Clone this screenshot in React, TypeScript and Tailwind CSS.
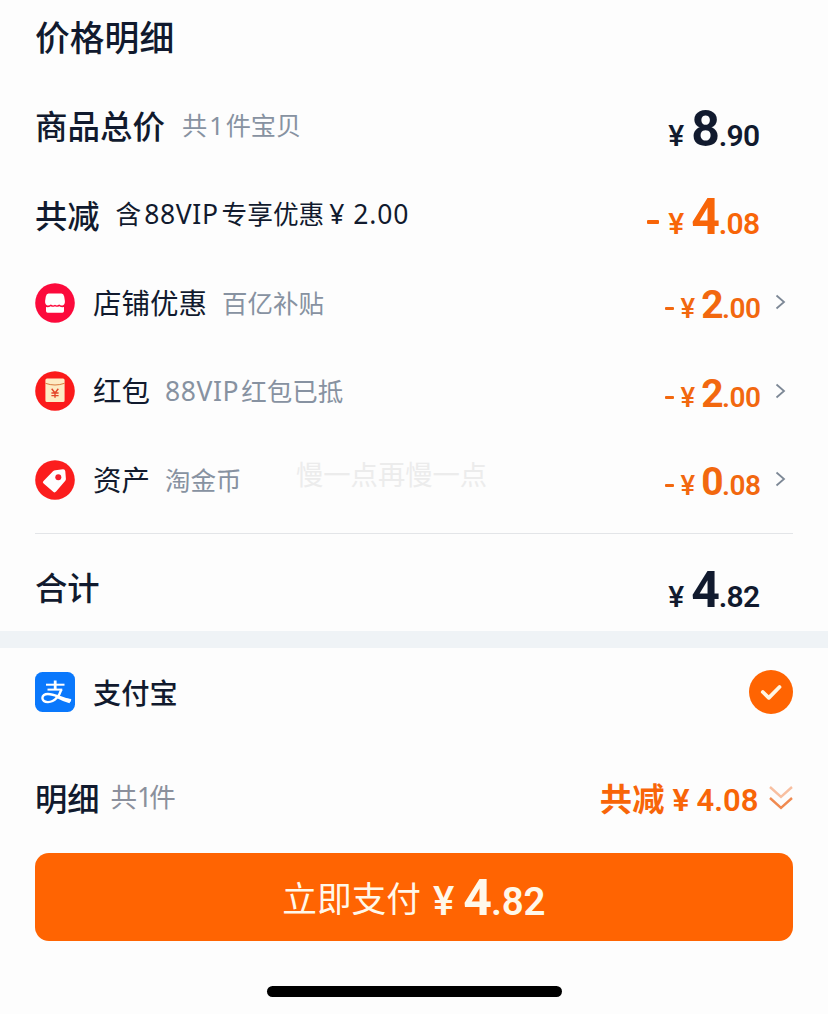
/**
 * PriceDetail - Checkout sheet with price breakdown, payment method and pay button.
 */
import { ReactNode } from "react";

interface PriceProps {
  whole: string;
  cents: string;
  minus?: boolean;
  small?: boolean;
}

// Amount with a large integer part and smaller cents
function Price({ whole, cents, minus, small }: PriceProps) {
  if (small) {
    return (
      <div className="flex items-baseline font-['Roboto'] font-bold leading-none text-[#f2680f]">
        <span className="relative top-[3px] mr-[7px] h-[3px] w-[9px] self-center rounded-[1px] bg-[#f2680f]" />
        <span className="mr-[6px] text-[27.5px] font-medium">¥</span>
        <span className="text-[39px] font-bold tracking-[-1.5px]">{whole}</span>
        <span className="text-[28px] font-semibold tracking-[-0.5px]">.{cents}</span>
      </div>
    );
  }
  return (
    <div className={`flex items-baseline font-['Roboto'] font-bold leading-none ${minus ? "text-[#f86508]" : "text-[#111a2e]"}`}>
      {minus && <span className="relative top-[5px] mr-[9px] h-[4px] w-[12px] self-center rounded-[1px] bg-[#f86508]" />}
      <span className="mr-[7px] text-[30px] font-medium">¥</span>
      <span className="text-[50px] tracking-[-1.2px]">{whole}</span>
      <span className="text-[30px] font-semibold tracking-[-0.7px]">.{cents}</span>
    </div>
  );
}

function Chevron() {
  return (
    <svg className="mb-[1px] ml-[14px] h-[16px] w-[11px]" viewBox="0 0 11 16" fill="none" stroke="#7d8896" strokeWidth="1.8">
      <path d="M1.500 1.500 L9 8 L1.500 14.500" />
    </svg>
  );
}

interface DiscountRowProps {
  icon: ReactNode;
  label: string;
  note: ReactNode;
  whole: string;
  cents: string;
}

function DiscountRow({ icon, label, note, whole, cents }: DiscountRowProps) {
  return (
    <div className="flex h-[88.5px] items-center">
      {icon}
      <div className="ml-[18px] flex items-center pb-[2px]">
        <span className="text-[28.5px] text-[#111a2e]">{label}</span>
        <span className="ml-[15px] text-[25.5px] text-[#8792a1]">{note}</span>
      </div>
      <div className="ml-auto flex items-center">
        <div className="pt-[6px]">
          <Price small whole={whole} cents={cents} />
        </div>
        <Chevron />
      </div>
      <div className="w-[7px]" />
    </div>
  );
}

const ShopIcon = (
  <svg className="size-[40px]" viewBox="0 0 40 40">
    <circle cx="20" cy="20" r="19.8" fill="#fc0a3c" />
    <path d="M13.500 10.500h13q2 0 2.700 3l.7 4.500q.2 4-2.400 4.400-1.800.3-3.300-.8-2 1.500-4.200.2-2.200 1.300-4.200-.2-1.500 1.100-3.300.8-2.600-.4-2.400-4.400l.7-4.500q.7-3 2.700-3z" fill="#fff" />
    <path d="M11 24q2.600.5 4.800-.8 2.200 1.200 4.200 0 2 1.200 4.200 0 2.200 1.300 4.800.8v4q0 1.700-1.700 1.700H12.700q-1.700 0-1.700-1.700z" fill="#fff" />
  </svg>
);

const PacketIcon = (
  <svg className="size-[40px]" viewBox="0 0 40 40">
    <circle cx="20" cy="20" r="19.8" fill="#fb1a1a" />
    <path d="M12 7.500h16q1.600 0 1.600 1.600V29.500q0 1.600-1.600 1.600H12q-1.600 0-1.600-1.600V9.100q0-1.600 1.600-1.600z" fill="#fdebc4" />
    <path d="M10.400 12.300q9.600 3.400 19.200 0" stroke="#d8793c" strokeWidth="1" fill="none" />
    <path d="M16.700 17.800l3.300 4.200 3.300-4.200M16.400 22h7.200M16.400 24.600h7.200M20 22v4.800" stroke="#e2462a" strokeWidth="1.400" fill="none" />
  </svg>
);

const TagIcon = (
  <svg className="size-[40px]" viewBox="0 0 40 40">
    <circle cx="20" cy="20" r="19.800" fill="#fb1d1d" />
    <path d="M20.500 10.200l7.300-.9q2.300-.2 2.500 2l.6 7.500q.1 1.200-.8 2.200l-9 10.600q-1.300 1.500-2.900.2l-9.600-8.200q-1.500-1.300-.1-2.700l9.500-9.600q1-1 2.500-1.100z" fill="#fff" />
    <circle cx="23.300" cy="17.300" r="3" fill="#f4202c" />
  </svg>
);

const AlipayIcon = (
  <svg className="size-[40px]" viewBox="0 0 40 40">
    <rect width="40" height="40" rx="7.500" fill="#0a78fc" />
    <g fill="none" stroke="#fff">
      <path d="M11 12.700h18.500" strokeWidth="2" />
      <path d="M20.200 8.500v9" strokeWidth="2.800" />
      <path d="M12.500 17.600h14.800" strokeWidth="2" />
      <path d="M26.300 17.600c-1.800 6-6.300 12.300-13.300 12.500-3.500.1-5.600-1.600-5.600-4 0-2.600 2.400-4.100 5.400-4.100 7 0 12.500 4.200 23.200 6.700" strokeWidth="2.400" />
    </g>
    <path d="M21 23.500q7 3 15.300 3.600l-1.800 4.200q-7.500-2.200-14.500-6z" fill="#fff" />
  </svg>
);

export default function App() {
  return (
    <div className="relative h-[1014px] w-[828px] overflow-hidden bg-[#fdfdfd] font-['Noto_Sans_CJK_SC',sans-serif] leading-none whitespace-nowrap text-[#111a2e]">
      <div className="pr-[35.5px] pl-[35px]">
        <div className="flex h-[82px] items-center pb-[10px] text-[34.8px] font-medium">价格明细</div>

        {/* Goods total */}
        <div className="flex h-[88px] items-center justify-between">
          <div className="flex items-center pb-[2px]">
            <span className="text-[32.5px] font-medium">商品总价</span>
            <span className="ml-[17px] text-[25.2px] text-[#8792a1]">
              共<span className="mx-[2px] font-['Noto_Sans']">1</span>件宝贝
            </span>
          </div>
          <div className="pt-[5px] pr-[33px]">
            <Price whole="8" cents="90" />
          </div>
        </div>

        {/* Total discount */}
        <div className="flex h-[88.5px] items-center justify-between">
          <div className="flex items-center pb-[1px]">
            <span className="text-[32.3px] font-medium">共减</span>
            <span className="ml-[16px] text-[25.7px]">
              含<span className="mx-[3px] font-['Noto_Sans'] text-[26.5px] tracking-[0.6px]">88VIP</span>专享优惠
              <span className="ml-[5px] font-['Noto_Sans'] text-[26.5px] tracking-[0.9px]">¥ 2.00</span>
            </span>
          </div>
          <div className="pt-[5px] pr-[33px]">
            <Price minus whole="4" cents="08" />
          </div>
        </div>

        <DiscountRow icon={ShopIcon} label="店铺优惠" note="百亿补贴" whole="2" cents="00" />
        <DiscountRow
          icon={PacketIcon}
          label="红包"
          note={<><span className="mr-[2px] font-['Noto_Sans'] text-[26.5px] tracking-[0.6px]">88VIP</span>红包已抵</>}
          whole="2"
          cents="00"
        />
        <DiscountRow icon={TagIcon} label="资产" note="淘金币" whole="0" cents="08" />

        <div className="mt-[8.5px] h-px bg-[#e3e5e8]" />

        <div className="flex h-[97.5px] items-center justify-between pt-[10px]">
          <span className="pb-[3px] text-[32.3px] font-medium">合计</span>
          <div className="pt-[5px] pr-[33px]">
            <Price whole="4" cents="82" />
          </div>
        </div>
      </div>

      <div className="h-[17px] bg-[#eff3f6]" />

      <div className="pr-[35.5px] pl-[35px]">
        {/* Payment method */}
        <div className="flex h-[88px] items-center">
          {AlipayIcon}
          <span className="ml-[18px] text-[28.2px] font-medium">支付宝</span>
          <svg className="ml-auto size-[44px]" viewBox="0 0 44 44">
            <circle cx="22" cy="22" r="22" fill="#ff6402" />
            <path d="M13.800 22l6 5.800L30.500 17" stroke="#fff6e4" strokeWidth="3.800" fill="none" strokeLinecap="round" strokeLinejoin="round" />
          </svg>
        </div>

        <div className="mt-[18px] flex h-[88px] items-center">
          <span className="pb-[2px] text-[32.3px] font-medium">明细</span>
          <span className="ml-[11px] pb-[2px] text-[26.5px] text-[#8b909c]">
            共<span className="font-['Noto_Sans'] tracking-[-3px]">1</span>件
          </span>
          <div className="ml-auto flex items-baseline text-[#f86508]">
            <span className="text-[32.3px] font-bold">共减</span>
            <span className="ml-[8px] font-['Roboto'] text-[32px] font-semibold">¥</span>
            <span className="ml-[7px] font-['Roboto'] text-[31px] font-semibold">4.08</span>
          </div>
          <svg className="ml-[10px] h-[26px] w-[24px]" viewBox="0 0 24 26" fill="none" strokeWidth="2.400">
            <path d="M1 2l11 10L23 2" stroke="#f8bfa0" />
            <path d="M1 13l11 10L23 13" stroke="#f08a50" />
          </svg>
        </div>

        <button className="mt-[11px] flex h-[88px] w-full items-center justify-center rounded-[14px] bg-[#ff6402] text-[#fff8ea]">
          <span className="flex items-center">
            <span className="text-[34.7px]">立即支付</span>
            <span className="ml-[12px] flex items-baseline pt-[1px] font-['Roboto'] font-bold">
              <span className="text-[40px] font-medium">¥</span>
              <span className="ml-[9px] text-[50px] tracking-[-1px]">4</span>
              <span className="text-[38.5px] font-semibold tracking-[-0.2px]">.82</span>
            </span>
          </span>
        </button>
      </div>

      <div className="mx-auto mt-[45px] h-[11px] w-[295px] rounded-full bg-black" />

      {/* Watermark */}
      <div className="absolute top-[460px] left-[296px] text-[27.3px] text-[#ececec]">慢一点再慢一点</div>
    </div>
  );
}
